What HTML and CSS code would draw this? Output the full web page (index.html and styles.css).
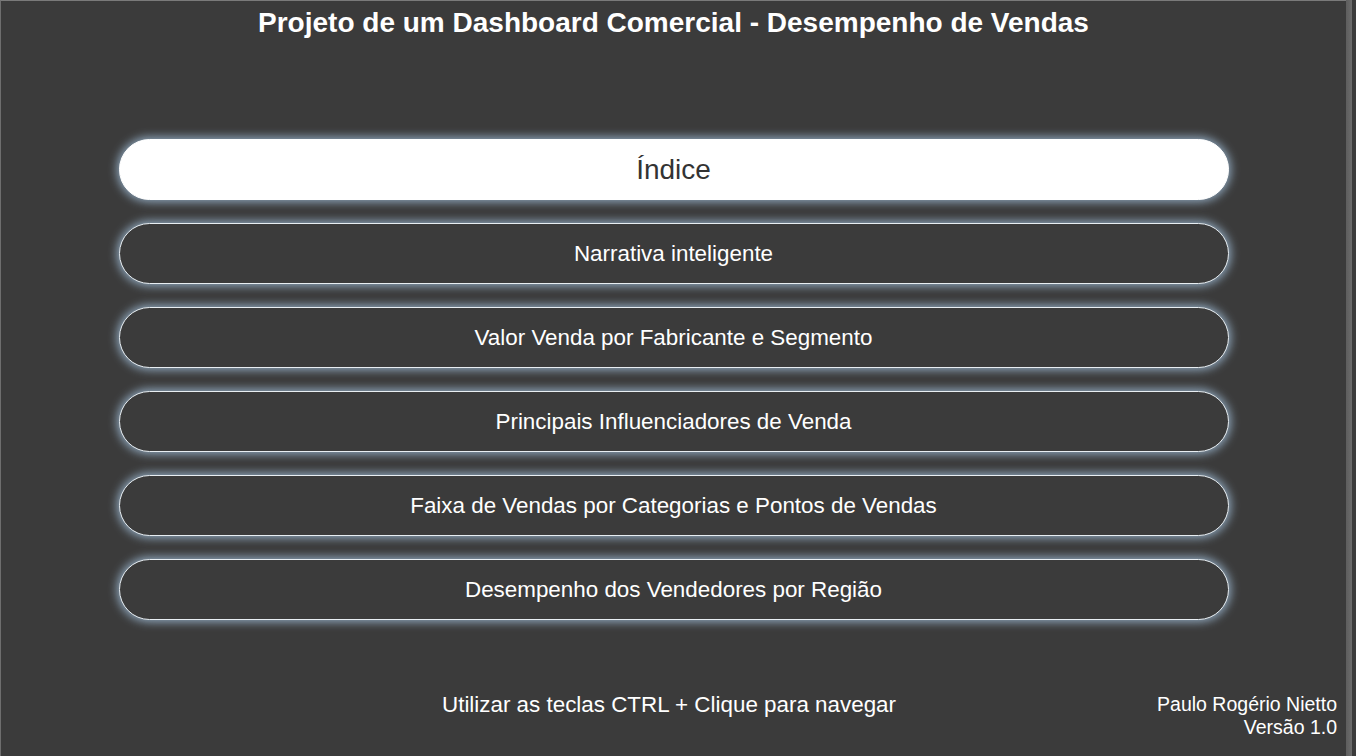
FILE: index.html
```html
<!DOCTYPE html>
<html lang="pt-BR">
<head>
<meta charset="utf-8">
<title>Projeto de um Dashboard Comercial</title>
<link rel="stylesheet" href="styles.css">
</head>
<body>
<div class="page">
  <div class="main">
    <h1 class="title">Projeto de um Dashboard Comercial - Desempenho de Vendas</h1>
    <nav class="menu">
      <div class="btn btn-active">Índice</div>
      <div class="btn">Narrativa inteligente</div>
      <div class="btn">Valor Venda por Fabricante e Segmento</div>
      <div class="btn">Principais Influenciadores de Venda</div>
      <div class="btn">Faixa de Vendas por Categorias e Pontos de Vendas</div>
      <div class="btn">Desempenho dos Vendedores por Região</div>
    </nav>
    <footer class="footer">
      <div class="hint">Utilizar as teclas CTRL + Clique para navegar</div>
      <div class="credit">
        <div>Paulo Rogério Nietto</div>
        <div>Versão 1.0</div>
      </div>
    </footer>
  </div>
  <div class="strip"></div>
</div>
</body>
</html>
```
FILE: styles.css
```css
* { box-sizing: border-box; }
html, body { margin: 0; padding: 0; }
body {
  background: #3b3b3b;
  font-family: "Liberation Sans", Arial, sans-serif;
  color: #ffffff;
  overflow: hidden;
}
.page {
  display: flex;
  height: 756px;
}
.main {
  width: 1346px;
  display: flex;
  flex-direction: column;
  border-left: 1px solid #6e6e6e;
  border-top: 1px solid #7a7a7a;
}
.strip {
  width: 6px;
  background: linear-gradient(to right, #5e5e5e, #6c6c6c);
}
.title {
  margin: 0;
  padding-top: 7px;
  font-size: 28px;
  line-height: 30px;
  font-weight: bold;
  text-align: center;
}
.menu {
  margin-top: 101px;
  display: flex;
  flex-direction: column;
  align-items: center;
  gap: 23px;
}
.btn {
  width: 1110px;
  height: 61px;
  border-radius: 31px;
  border: 1.5px solid #e8eef2;
  box-shadow: 0 0 10px 2px rgba(165, 195, 222, 0.8);
  display: flex;
  align-items: center;
  justify-content: center;
  font-size: 22.4px;
  color: #ffffff;
  background: #3b3b3b;
}
.btn-active {
  background: #ffffff;
  color: #333333;
  font-size: 28px;
  border-color: #ffffff;
}
.footer {
  margin-top: 73px;
  display: grid;
  grid-template-columns: 1fr auto 1fr;
  align-items: start;
  padding-right: 9px;
}
.hint {
  grid-column: 2;
  font-size: 22.4px;
  line-height: 24px;
  text-align: center;
}
.credit {
  grid-column: 3;
  justify-self: end;
  text-align: right;
  font-size: 19.5px;
  line-height: 23px;
}
```
